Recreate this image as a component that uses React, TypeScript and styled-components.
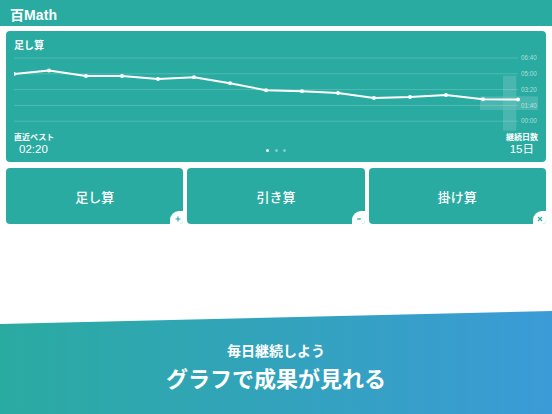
import React from "react";
import styled, { createGlobalStyle } from "styled-components";

const TEAL = "#2aaba1";

const Global = createGlobalStyle`
  html, body { margin: 0; padding: 0; background: #fff; }
  body { font-family: "Liberation Sans", "Noto Sans CJK JP", sans-serif; }
  * { box-sizing: border-box; }
`;

const Page = styled.div`
  display: flex;
  flex-direction: column;
  min-height: 100vh;
`;

const Header = styled.header`
  height: 26px;
  background: ${TEAL};
  color: #fff;
  display: flex;
  align-items: center;
  padding: 1px 0 0 10px;
  font-size: 14px;
  font-weight: 700;
  letter-spacing: 0.1px;
`;

const Main = styled.main`
  padding: 5px 6px 0;
  display: flex;
  flex-direction: column;
  gap: 6px;
`;

const Card = styled.section`
  background: ${TEAL};
  border-radius: 4px;
  padding: 8px 8px 6px;
  color: #fff;
  display: flex;
  flex-direction: column;
`;

const CardTitle = styled.div`
  font-size: 10px;
  line-height: 14px;
  font-weight: 700;
`;

const ChartSvg = styled.svg`
  display: block;
  width: 524px;
  height: 80px;
`;

const Footer = styled.div`
  display: grid;
  grid-template-columns: 1fr auto 1fr;
  align-items: end;
`;

const Stat = styled.div<{ $right?: boolean }>`
  display: flex;
  flex-direction: column;
  align-items: ${(p) => (p.$right ? "flex-end" : "flex-start")};
`;

const StatLabel = styled.div`
  font-size: 8px;
  line-height: 10px;
  font-weight: 700;
`;

const StatValue = styled.div<{ $right?: boolean }>`
  font-size: 11.5px;
  line-height: 13px;
  padding: ${(p) => (p.$right ? "0 4px 0 0" : "0 0 0 5px")};
`;

const Dots = styled.div`
  display: flex;
  gap: 5.5px;
  padding-bottom: 4px;
`;

const Dot = styled.span<{ $active?: boolean }>`
  width: 3px;
  height: 3px;
  border-radius: 50%;
  background: ${(p) => (p.$active ? "#fff" : "rgba(255,255,255,0.4)")};
`;

const ButtonRow = styled.div`
  display: flex;
  gap: 4px;
`;

const OpButton = styled.button`
  position: relative;
  flex: 1;
  height: 56px;
  border: none;
  border-radius: 4px;
  background: ${TEAL};
  color: #fff;
  font-family: "Noto Sans CJK JP", sans-serif;
  font-size: 13px;
  font-weight: 500;
  padding: 0;
  cursor: pointer;
`;

const Badge = styled.span`
  position: absolute;
  right: 0;
  bottom: 0;
  width: 13px;
  height: 13px;
  background: #fff;
  border-top-left-radius: 9px;
  border-bottom-right-radius: 4px;
  display: flex;
  align-items: center;
  justify-content: center;
  padding: 2px 0 0 2px;
`;

const Banner = styled.section`
  margin-top: auto;
  height: 103px;
  background: linear-gradient(90deg, #2aaba1 0%, #3b9bd7 100%);
  clip-path: polygon(0 13px, 100% 0, 100% 100%, 0 100%);
  color: #fff;
  display: flex;
  flex-direction: column;
  align-items: center;
  padding-top: 30px;
  gap: 4px;
  font-family: "Noto Sans CJK JP", sans-serif;
  font-weight: 700;
`;

const BannerSub = styled.div`
  font-size: 14px;
  line-height: 18px;
`;

const BannerMain = styled.div`
  font-size: 22px;
  line-height: 28px;
`;

const pts: [number, number][] = [
  [0, 21], [35, 17.5], [72, 23], [108, 23], [144, 26], [180, 24.3],
  [216, 30.3], [252, 37.3], [288, 38.3], [324, 40], [360, 45],
  [396, 44], [432, 42], [469, 46.3], [504, 46.6],
];

const gridY = [5, 20.8, 36.6, 52.4, 68.2];
const labels = ["06:40", "05:00", "03:20", "01:40", "00:00"];

const Chart = () => (
  <ChartSvg viewBox="0 0 524 80">
    {gridY.map((y, i) => (
      <g key={i}>
        <line x1={0} x2={504} y1={y} y2={y} stroke="rgba(255,255,255,0.18)" strokeWidth={1} />
        <text x={507} y={y + 2.2} fontSize={6.3} fill="rgba(255,255,255,0.6)" fontFamily="Liberation Sans, sans-serif">
          {labels[i]}
        </text>
      </g>
    ))}
    <rect x={489} y={22.7} width={13.3} height={55} fill="rgba(255,255,255,0.15)" />
    <rect x={466} y={43.3} width={23} height={13.7} fill="rgba(255,255,255,0.15)" />
    <rect x={502.3} y={43.3} width={22} height={13.7} fill="rgba(255,255,255,0.15)" />
    <rect x={489} y={43.3} width={13.3} height={13.7} fill="rgba(255,255,255,0.08)" />
    <polyline
      points={pts.map((p) => p.join(",")).join(" ")}
      fill="none"
      stroke="#fff"
      strokeWidth={2}
      strokeLinejoin="round"
    />
    {pts.map(([x, y], i) => (
      <circle key={i} cx={x} cy={y} r={2} fill="#fff" />
    ))}
  </ChartSvg>
);

const Icon = ({ kind }: { kind: "plus" | "minus" | "times" }) => (
  <svg width="6" height="6" viewBox="0 0 6 6">
    {kind === "plus" && (
      <path d="M3 0.5V5.5M0.5 3H5.5" stroke={TEAL} strokeWidth={1.1} />
    )}
    {kind === "minus" && <path d="M1.2 3H4.8" stroke={TEAL} strokeWidth={1.3} />}
    {kind === "times" && (
      <path d="M1 1L5 5M5 1L1 5" stroke={TEAL} strokeWidth={1.1} />
    )}
  </svg>
);

const ops: { label: string; kind: "plus" | "minus" | "times" }[] = [
  { label: "足し算", kind: "plus" },
  { label: "引き算", kind: "minus" },
  { label: "掛け算", kind: "times" },
];

export default function App() {
  return (
    <Page>
      <Global />
      <Header>百Math</Header>
      <Main>
        <Card>
          <CardTitle>足し算</CardTitle>
          <Chart />
          <Footer>
            <Stat>
              <StatLabel>直近ベスト</StatLabel>
              <StatValue>02:20</StatValue>
            </Stat>
            <Dots>
              <Dot $active />
              <Dot />
              <Dot />
            </Dots>
            <Stat $right>
              <StatLabel>継続日数</StatLabel>
              <StatValue $right>15日</StatValue>
            </Stat>
          </Footer>
        </Card>
        <ButtonRow>
          {ops.map((o) => (
            <OpButton key={o.label}>
              {o.label}
              <Badge>
                <Icon kind={o.kind} />
              </Badge>
            </OpButton>
          ))}
        </ButtonRow>
      </Main>
      <Banner>
        <BannerSub>毎日継続しよう</BannerSub>
        <BannerMain>グラフで成果が見れる</BannerMain>
      </Banner>
    </Page>
  );
}
